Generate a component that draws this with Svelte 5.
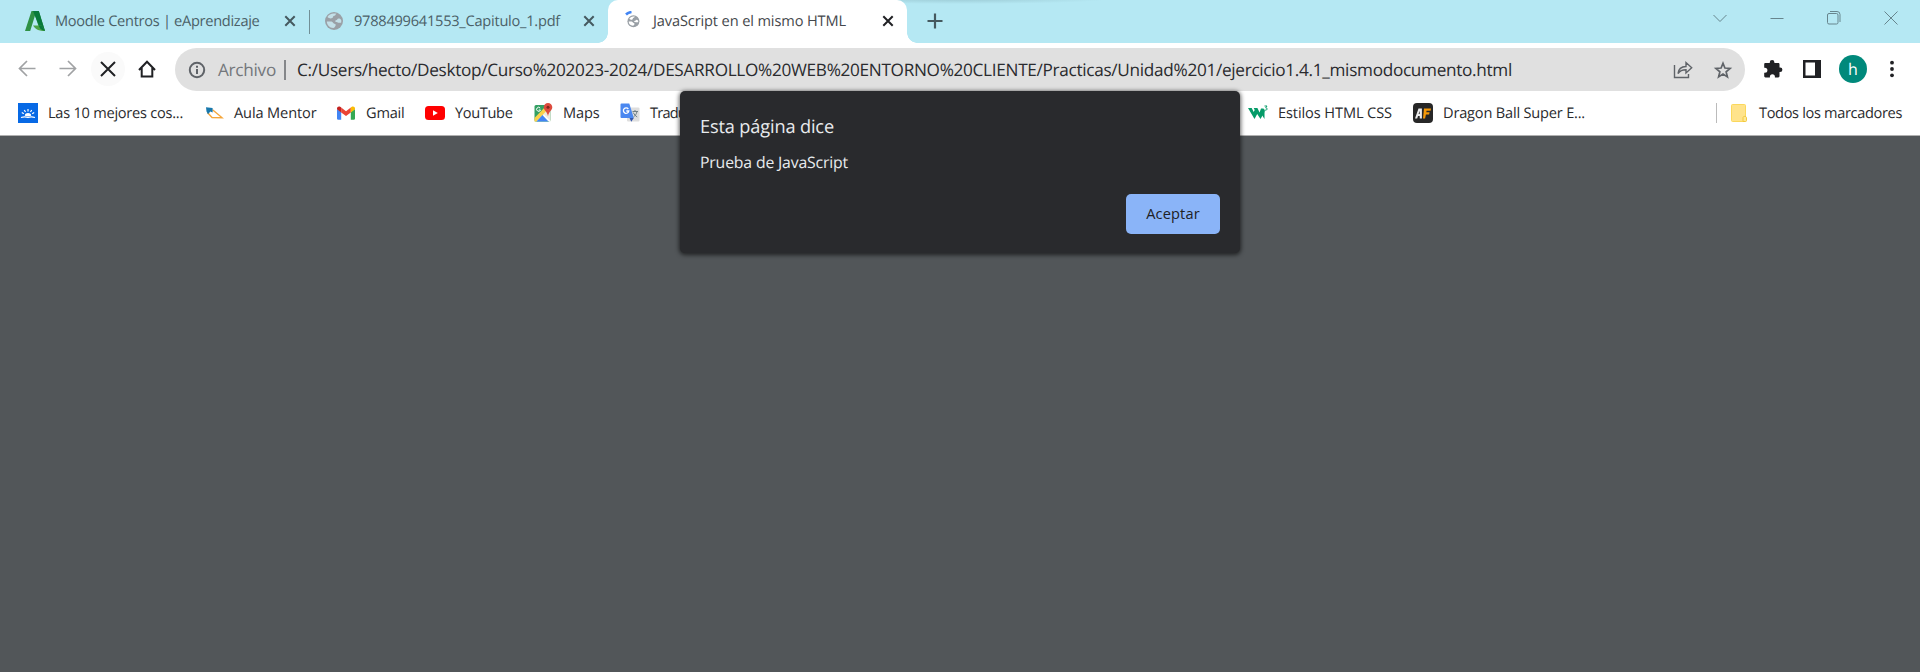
<script>
  const tabs = [
    { icon: 'andalucia', label: 'Moodle Centros | eAprendizaje', width: 204.5, active: false },
    { icon: 'globe', label: '9788499641553_Capitulo_1.pdf', width: 206, active: false },
    { icon: 'loading', label: 'JavaScript en el mismo HTML', width: 193, active: true }
  ];

  const bookmarks = [
    { icon: 'sunrise', label: 'Las 10 mejores cos...', width: 135, span: 186 },
    { icon: 'mentor', label: 'Aula Mentor', width: 82.5, span: 132 },
    { icon: 'gmail', label: 'Gmail', width: 38.5, span: 89 },
    { icon: 'youtube', label: 'YouTube', width: 57.5, span: 108 },
    { icon: 'maps', label: 'Maps', width: 36.5, span: 87 },
    { icon: 'translate', label: 'Tradu', width: 36, span: 628 },
    { icon: 'w3', label: 'Estilos HTML CSS', width: 114, span: 165 },
    { icon: 'af', label: 'Dragon Ball Super E...', width: 142, span: 180 }
  ];

  // Spaces the letters so that a label fills exactly the given width.
  function fit(node, target) {
    const range = document.createRange();
    range.selectNodeContents(node);
    const natural = range.getBoundingClientRect().width;
    node.style.letterSpacing = `${(target - natural) / node.textContent.length}px`;
  }
</script>

{#snippet globe()}
  <circle cx="10" cy="10" r="9" fill="#9aa0a6" />
  <path d="M3.500 6c2 1.800 3.500 1.500 4.800 1 1-.5.5-2 2-2.200s1-1.500 2.200-2C8.500 1.800 5 3 3.500 6ZM2.800 10.500h4.700c1.500 0 1.500 2.500 3.500 2.500 1.500 0 .5 3.500-1.800 4C5.500 16.800 3 14 2.800 10.500ZM17.200 9c-1.500-2-3.500-1.800-4-.5-.4 1.200-2 .5-2 1.700s2 .5 3 1.500h2.900c.3-1 .3-1.800.1-2.700Z" fill="#c3e0e8" />
{/snippet}

{#snippet icon(name)}
  <svg class="icon" viewBox="0 0 20 20" width="20" height="20">
    {#if name === 'andalucia'}
      <path d="M6.500 0h7.300L20 20l-5.200-1L10 4.500 5.200 20H0Z" fill="#2f9145" />
      <path d="M8 0h5.800L20 20l-4.500-2L9.800 4.500Z" fill="#087a3b" />
      <path d="M8 14.500h8.500L20 20c-4 .2-9.300-.8-12-5.500Z" fill="#4ba346" />
      <path d="M13.500 14.500h3L20 20c-1.500-.5-3-1-4.500-2Z" fill="#087a3b" />
    {:else if name === 'globe'}
      {@render globe()}
    {:else if name === 'loading'}
      <g transform="translate(1.500 4) scale(.63)">
        <circle cx="11" cy="10" r="9.500" fill="#9aa0a6" />
        <path d="M4.500 6c2 2 3.500 2 4.800 1 1-.5.500-2 2-2.500s1-1.200 2.200-2C9 1.500 6 3 4.500 6ZM3.500 10.500H8c1.500 0 2 2.500 4 2.500 1.500 0 .5 3.500-1.800 4.200-4-.2-6.700-3-6.700-6.700ZM18.500 9c-1.500-2-3.500-1.800-4-.5-.4 1.200-2 .5-2 1.700s2 .5 3 1.500h2.900c.3-1 .3-1.800.1-2.700Z" fill="#fff" />
      </g>
      <path d="M1 3.500C2.500 2 4.500 1.200 6.500 1" fill="none" stroke="#4285f4" stroke-width="2.500" />
    {:else if name === 'sunrise'}
      <path d="M0 0h20v20H0Z" fill="#0769e5" />
      <path d="M3 14.500c3-1 4.500-1 7 0 2.500-1 4-1 7 0M3.800 9.500l2 1.300M6.300 7l1.200 2M10 6v2.500M13.700 7l-1.200 2M16.200 9.500l-2 1.300" fill="none" stroke="#fff" stroke-width="1.200" />
      <path d="M6.800 12.800a3.200 2.800 0 0 1 6.400 0l-3.200.6Z" fill="#fff" />
    {:else if name === 'mentor'}
      <path d="M3.500 9.500 8 14.500l10.200.3L8.500 6.800" fill="none" stroke="#f5a63b" stroke-width="1.400" />
      <path d="M2 4.300 8.600 5v4.600L6.300 8.500 4 11.300 2.500 8.500Z" fill="#1878ad" />
    {:else if name === 'gmail'}
      <path d="M1 6v9.500c0 .8.500 1.200 1.200 1.200h3V9Z" fill="#4285f4" />
      <path d="M14.800 9v7.700h3c.700 0 1.200-.4 1.200-1.200V6Z" fill="#34a853" />
      <path d="M5.200 4.600 10 8.200l4.800-3.600v4.800L10 13 5.200 9.400Z" fill="#ea4335" />
      <path d="M1 5.500c0-2 2-2.600 3.200-1.700l1 .8v4.800L1 6.300Z" fill="#c5221f" />
      <path d="M14.800 4.600l1-.8C17 2.900 19 3.500 19 5.500v.8l-4.200 3.100Z" fill="#fbbc04" />
    {:else if name === 'youtube'}
      <rect y="3" width="20" height="14" rx="3.500" fill="#f00" />
      <path d="m8 7.300 4.800 2.700L8 12.700Z" fill="#fff" />
    {:else if name === 'maps'}
      <rect x="1.500" y="2" width="16" height="16.500" rx="1.500" fill="#34a064" />
      <path d="M1.500 18 17.500 3v15Z" fill="#eeeade" />
      <path d="M1.500 15 14 2h3v2L3.500 18.500h-2Z" fill="#fbd24b" />
      <path d="m3.500 18.500 6-6.500 6 6.500Z" fill="#4285f4" />
      <path d="m10.500 12 6.500 6.500" stroke="#fff" stroke-width="1.500" />
      <path d="M15 0a4.300 4.300 0 0 0-4.300 4.300c0 3.200 3.500 4 4.300 9 .8-5 4.300-5.800 4.300-9A4.300 4.300 0 0 0 15 0Z" fill="#dd4b3e" />
      <circle cx="15" cy="4.300" r="1.500" fill="#82271d" />
      <path d="M7.200 5.100A2 2 0 1 0 7.500 7H5.800" fill="none" stroke="#fff" />
    {:else if name === 'translate'}
      <rect x="7" y="4.500" width="12.500" height="14" rx="1" fill="#dedede" />
      <path d="m9.500 15 4.300 0-2.500 3.700Z" fill="#3457ac" />
      <path d="M1.500.5h7.800l4.500 14.500H1.500A1 1 0 0 1 .5 14V1.500a1 1 0 0 1 1-1Z" fill="#4b88f0" />
      <path d="M8.300 6A2.700 2.700 0 1 0 8.800 8H6.300" fill="none" stroke="#fff" stroke-width="1.300" />
      <path d="M12.500 8.500H18M15 7v1.500M17 8.500c-.5 2.500-2 4.500-3.500 5.500M13.200 9.500c1 2 2.500 3.500 4 4.500" fill="none" stroke="#6f7f85" />
    {:else if name === 'w3'}
      <path d="M0 5h3.700l2 4 1-2-1-2h3.700l2.200 4.500L13 5.500h2.500L17 8l-4.500 8-3.300-5-2.700 5Z" fill="#059b68" />
      <path d="m12 9 4.500 7V9l-2-2Z" fill="#059b68" />
      <path d="M16.500 3h2.500l-1.300 1.900c2.200-.1 1.800 3-1.200 2.100" fill="none" stroke="#059b68" />
    {:else if name === 'af'}
      <rect width="20" height="20" rx="4" fill="#272727" />
      <path d="M2 15.500 5.500 5.500h3.400v10H6.800l-.1-2.500H5l-.8 2.500ZM5.600 11h1.100V7.800Z" fill="#eee" fill-rule="evenodd" />
      <path d="M11 5.500h7l-.4 2.200h-4l-.3 1.600h3.300l-.5 2.100h-3.200l-.8 4.100H10Z" fill="#f79a08" />
    {/if}
  </svg>
{/snippet}

<div class="window">
  <header class="tabstrip">
    {#each tabs as tab}
      <div class="tab" class:active={tab.active}>
        {@render icon(tab.icon)}
        <div class="label" style:width="{tab.width}px"><span use:fit={tab.width}>{tab.label}</span></div>
        <svg class="close" viewBox="0 0 12 12" width="12" height="12"><path d="m1.300 1.300 9.400 9.400m0-9.400-9.400 9.400" /></svg>
      </div>
    {/each}
    <svg class="plus" viewBox="0 0 16 16" width="16" height="16"><path d="M8 .5v15M.5 8h15" /></svg>
    <div class="controls">
      <svg viewBox="0 0 14 14" width="14" height="14"><path d="m.5 4 6.500 6.500L13.500 4" /></svg>
      <svg viewBox="0 0 14 14" width="14" height="14"><path d="M.5 7.500h13" /></svg>
      <svg viewBox="0 0 14 14" width="14" height="14"><rect x=".5" y="2.500" width="10.500" height="10.500" rx="1.500" /><path d="M3 .5h7a3 3 0 0 1 3 3V11" /></svg>
      <svg viewBox="0 0 14 14" width="14" height="14"><path d="m.5.5 13 13m0-13-13 13" /></svg>
    </div>
  </header>

  <div class="toolbar">
    <div class="nav">
      <svg viewBox="0 0 20 20" width="20" height="20" class="dim"><path d="M18.500 9.500H3M10 2 2.500 9.500 10 17" /></svg>
      <svg viewBox="0 0 20 20" width="20" height="20" class="dim"><path d="M1.500 9.500H17M10 2l7.500 7.500L10 17" /></svg>
      <div class="stop"><svg viewBox="0 0 16 16" width="16" height="16"><path d="m1 1 14 14M15 1 1 15" /></svg></div>
      <svg viewBox="0 0 20 20" width="20" height="20"><path d="M2 11 10 2.700l8 8.300M4.700 9v8.500h10.600V9" /></svg>
    </div>
    <div class="omnibox">
      <svg class="info" viewBox="0 0 18 18" width="18" height="18"><circle cx="9" cy="9" r="7.200" /><path d="M9 8v5M9 4.800v2" /></svg>
      <div class="label scheme"><span use:fit={58}>Archivo</span></div>
      <i></i>
      <div class="label url"><span use:fit={1215}>C:/Users/hecto/Desktop/Curso%202023-2024/DESARROLLO%20WEB%20ENTORNO%20CLIENTE/Practicas/Unidad%201/ejercicio1.4.1_mismodocumento.html</span></div>
      <svg class="share" viewBox="0 0 20 20" width="20" height="20"><path d="M1.500 5v12.500h14V14M5 13.500c.5-5 3.500-6.800 8-7V2.500l5.700 5.300L13 13V9.700c-3.500 0-6 .8-8 3.800Z" /></svg>
      <svg class="star" viewBox="0 0 20 20" width="20" height="20"><path d="m10 3.200 1.900 4.800 5.200.4-4 3.400 1.300 5.100L10 14.100l-4.400 2.800 1.300-5.100-4-3.400 5.200-.4Z" /></svg>
    </div>
    <div class="actions">
      <svg viewBox="0 0 20 20" width="20" height="20"><path d="M2.500 4h4.300V3.200a2.300 2.300 0 0 1 4.600 0V4h3.800c.8 0 1.300.5 1.300 1.300V8.500h.6a2.300 2.300 0 0 1 0 4.600h-.6v4c0 .8-.5 1.300-1.300 1.300h-3.300v-.7a2.500 2.500 0 0 0-5 0v.7H2.500c-.800 0-1.300-.5-1.300-1.300v-3.300h.7a2.500 2.500 0 0 0 0-5h-.7V5.300C1.200 4.500 1.700 4 2.500 4Z" /></svg>
      <svg viewBox="0 0 18 18" width="18" height="18"><path fill-rule="evenodd" d="M0 0h18v18H0ZM2.500 2.500v13H12v-13Z" /></svg>
      <div class="avatar">h</div>
      <svg viewBox="0 0 4 18" width="4" height="18"><circle cx="2" cy="2.700" r="1.900" /><circle cx="2" cy="9" r="1.900" /><circle cx="2" cy="15.300" r="1.900" /></svg>
    </div>
  </div>

  <nav class="bookmarks">
    {#each bookmarks as mark}
      <div class="mark" style:width="{mark.span}px">
        {@render icon(mark.icon)}
        <div class="label" style:width="{mark.width}px"><span use:fit={mark.width}>{mark.label}</span></div>
      </div>
    {/each}
    <div class="all">
      <svg viewBox="0 0 16 18" width="16" height="18"><rect x=".5" y=".5" width="14" height="17" rx="1" fill="#ffe38b" stroke="#fbd85c" /><path d="M12 17.500v-4c0-1.500 3.500-1.500 3.500 0v3a1 1 0 0 1-1 1Z" fill="#ffe892" stroke="#f2c83f" /></svg>
      <div class="label"><span use:fit={143}>Todos los marcadores</span></div>
    </div>
  </nav>

  <main></main>

  <div class="dialog" role="alertdialog" aria-labelledby="title">
    <h1 id="title"><span use:fit={134}>Esta página dice</span></h1>
    <p><span use:fit={148}>Prueba de JavaScript</span></p>
    <button><span use:fit={53.5}>Aceptar</span></button>
  </div>
</div>

<style>
  :global(body) { margin: 0; }
  .window {
    position: relative;
    display: flex;
    flex-direction: column;
    width: 1920px;
    height: 672px;
    overflow: hidden;
    background: #fff;
    font: 400 14.6px/20px 'Open Sans', 'Noto Sans', sans-serif;
    color: #2a2b2e;
    text-rendering: geometricPrecision;
  }
  svg { display: block; flex: none; }
  .label { flex: none; white-space: pre; }

  .tabstrip {
    display: flex;
    flex: none;
    height: 43px;
    background: radial-gradient(ellipse 150px 5px at 960px -1px, #9ccbd5, #b5e8f3) #b5e8f3;
    color: #4b6067;
  }
  .tab {
    position: relative;
    display: flex;
    box-sizing: border-box;
    width: 299px;
    height: 43px;
    padding: 0 12px 1px 15px;
    align-items: center;
  }
  .tab:first-child { width: 310px; padding: 0 14px 1px 25px; }
  .tab:first-child::after {
    content: '';
    position: absolute;
    right: 0;
    top: 10px;
    width: 1px;
    height: 24px;
    background: #718f96;
  }
  .tab:nth-child(2) { width: 298px; padding-left: 14px; padding-right: 13px; }
  .tab .label { margin: 0 0 0 10px; }
  .tab .close { margin-left: auto; }
  .close { fill: none; stroke: #45595f; stroke-width: 2; }
  .tab.active { background: #fff; border-radius: 10px 10px 0 0; color: #45484c; padding-left: 17px; padding-right: 13px; }
  .tab.active .label { margin-left: 8px; }
  .tab.active .close { stroke: #202124; }
  .tab.active::before, .tab.active::after {
    content: '';
    position: absolute;
    bottom: 0;
    width: 10px;
    height: 10px;
  }
  .tab.active::before { left: -10px; background: radial-gradient(circle at 0 0, transparent 9.5px, #fff 10px); }
  .tab.active::after { right: -10px; background: radial-gradient(circle at 100% 0, transparent 9.5px, #fff 10px); }
  .plus { margin: 13px 0 0 20px; fill: none; stroke: #45595f; stroke-width: 2.2; }
  .controls { display: flex; gap: 43px; margin: 11px 22px 0 auto; }
  .controls svg { fill: none; stroke: #67858d; stroke-width: 1; }

  .toolbar { display: flex; flex: none; height: 53px; align-items: flex-start; }
  .nav { display: flex; box-sizing: border-box; width: 175px; padding: 9px 0 0 17px; align-items: center; }
  .nav svg { fill: none; stroke: #202124; stroke-width: 2; }
  .nav .dim { stroke: #a0a2a4; stroke-width: 1.7; }
  .nav .dim + .dim { margin-left: 21px; }
  .stop { display: grid; width: 34px; height: 34px; margin: 0 12px 0 13px; place-items: center; border-radius: 50%; background: #fafafa; }
  .omnibox {
    display: flex;
    box-sizing: border-box;
    width: 1570px;
    height: 43px;
    margin-top: 5px;
    padding: 0 12px 0 13px;
    align-items: center;
    border-radius: 22px;
    background: #e0e0e0;
    font-size: 17.2px;
  }
  .omnibox .label { margin-top: 2px; }
  .info, .share, .star { fill: none; stroke: #5f6368; stroke-width: 2; }
  .share { margin-left: auto; stroke-width: 1.4; }
  .star { margin-left: 20px; stroke-width: 1.7; }
  .scheme { width: 59px; margin-left: 12px; color: #74777b; }
  .omnibox i { width: 2px; height: 20px; margin: 0 11px 0 7px; background: #85878a; }
  .url { width: 1215px; }
  .actions { display: flex; flex: 1; padding: 12px 26px 0 18px; align-items: center; }
  .actions svg { fill: #202124; }
  .actions svg:nth-child(2) { margin-left: 20px; }
  .avatar {
    width: 28px;
    height: 28px;
    margin: 0 23px 0 18px;
    border-radius: 50%;
    background: #00897b;
    color: #fff;
    font-size: 16px;
    line-height: 28px;
    text-align: center;
  }

  .bookmarks {
    display: flex;
    box-sizing: border-box;
    flex: none;
    height: 40px;
    padding: 0 18px 6px;
    align-items: center;
    border-bottom: 1px solid #b0b0b0;
  }
  .mark { display: flex; flex: none; gap: 10px; align-items: center; }
  .bookmarks .label { margin-top: 1px; }
  .all {
    display: flex;
    box-sizing: border-box;
    height: 20px;
    margin-left: 123px;
    padding-left: 14px;
    gap: 12px;
    align-items: center;
    border-left: 1px solid #bbb;
  }
  main { flex: 1; background: #525659; }

  .dialog {
    position: absolute;
    left: 680px;
    top: 91px;
    display: flex;
    box-sizing: border-box;
    width: 560px;
    height: 162px;
    padding: 23px 20px 19px;
    flex-direction: column;
    border-radius: 5px;
    background: #292a2d;
    box-shadow: 0 1px 4px 1px #0009;
    color: #e8eaed;
    white-space: nowrap;
  }
  h1 { margin: 0; font-size: 18.2px; font-weight: 400; line-height: 26px; }
  p { margin: 12px 0 0; font-size: 15.8px; font-weight: 400; line-height: 20px; }
  button {
    width: 94px;
    height: 40px;
    margin: auto 0 0 auto;
    padding: 0 0 2px;
    border: 0;
    border-radius: 5px;
    background: #8ab4f8;
    color: #202124;
    font: 500 14.6px/38px 'Open Sans', 'Noto Sans', sans-serif;
  }
</style>
